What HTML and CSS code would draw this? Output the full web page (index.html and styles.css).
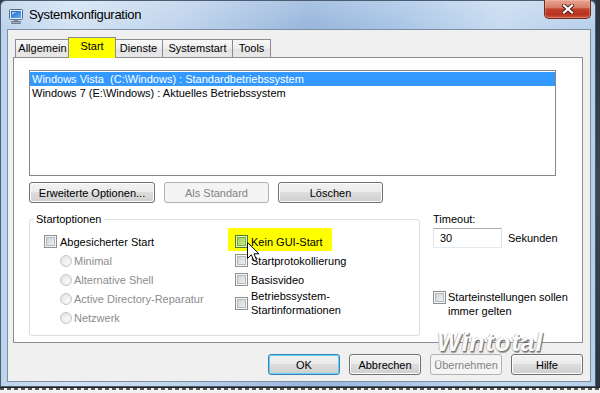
FILE: index.html
```html
<!DOCTYPE html>
<html>
<head>
    <title>Systemkonfiguration</title>
    <link rel="stylesheet" href="styles.css">
</head>
<body>
    <div id="screen">
        <div id="top-row">
            <div id="window">
                <div id="titlebar">
                    <svg class="app-icon" viewBox="0 0 16 16">
                        <defs>
                            <linearGradient id="scr" x1="0" y1="0" x2="1" y2="1">
                                <stop offset="0" stop-color="#1c64c8"/>
                                <stop offset="1" stop-color="#62b0f2"/>
                            </linearGradient>
                        </defs>
                        <rect x="1.5" y="1.5" width="13" height="10" rx="1" fill="#e4eaf1" stroke="#5b6b7f"/>
                        <rect x="3" y="3" width="10" height="7" fill="url(#scr)"/>
                        <path d="M4 4 L8 4 L4 7 Z" fill="#ffffff" opacity="0.6"/>
                        <rect x="6" y="11.5" width="4" height="2" fill="#7d899a"/>
                        <rect x="3.5" y="13.5" width="9" height="2" rx="0.5" fill="#a3afbd" stroke="#5b6b7f" stroke-width="0.8"/>
                    </svg>
                    <span class="title">Systemkonfiguration</span>
                    <div class="close-button">
                        <svg viewBox="0 0 12 10" width="12" height="10">
                            <path d="M2 1.5 L10 8.5 M10 1.5 L2 8.5" stroke="#4a1c14" stroke-width="4" stroke-linecap="square"/>
                            <path d="M2 1.5 L10 8.5 M10 1.5 L2 8.5" stroke="#ffffff" stroke-width="2.2" stroke-linecap="square"/>
                        </svg>
                    </div>
                </div>

                <div id="client">
                    <div id="tabs">
                        <div class="tab tab-allgemein">Allgemein</div>
                        <div class="tab tab-start selected">Start</div>
                        <div class="tab tab-dienste">Dienste</div>
                        <div class="tab tab-systemstart">Systemstart</div>
                        <div class="tab tab-tools">Tools</div>
                    </div>

                    <div id="panel">
                        <div id="os-list">
                            <div class="os-item selected">Windows Vista  (C:\Windows) : Standardbetriebssystem</div>
                            <div class="os-item">Windows 7 (E:\Windows) : Aktuelles Betriebssystem</div>
                        </div>

                        <div id="list-buttons">
                            <button class="btn btn-advanced">Erweiterte Optionen...</button>
                            <button class="btn btn-mid" disabled>Als Standard</button>
                            <button class="btn btn-mid">Löschen</button>
                        </div>

                        <div id="lower">
                            <fieldset id="boot-options">
                                <legend>Startoptionen</legend>
                                <div class="col">
                                    <div class="option"><span class="checkbox"></span>Abgesicherter Start</div>
                                    <div class="option sub"><span class="radio"></span>Minimal</div>
                                    <div class="option sub"><span class="radio"></span>Alternative Shell</div>
                                    <div class="option sub"><span class="radio"></span>Active Directory-Reparatur</div>
                                    <div class="option sub"><span class="radio"></span>Netzwerk</div>
                                </div>
                                <div class="col">
                                    <div class="option highlight"><span class="checkbox hover"></span>Kein GUI-Start</div>
                                    <div class="option"><span class="checkbox"></span>Startprotokollierung</div>
                                    <div class="option"><span class="checkbox"></span>Basisvideo</div>
                                    <div class="option two-line"><span class="checkbox"></span><span>Betriebssystem-<br>Startinformationen</span></div>
                                </div>
                            </fieldset>

                            <div id="timeout-box">
                                <div class="timeout-label">Timeout:</div>
                                <div class="timeout-row">
                                    <div class="textbox">30</div>
                                    <span class="unit">Sekunden</span>
                                </div>
                                <div class="start-setting"><span class="checkbox"></span><span>Starteinstellungen sollen<br>immer gelten</span></div>
                            </div>
                        </div>
                    </div>

                    <div id="footer">
                        <button class="btn btn-default">OK</button>
                        <button class="btn">Abbrechen</button>
                        <button class="btn" disabled>Übernehmen</button>
                        <button class="btn">Hilfe</button>
                    </div>
                </div>

                <div class="watermark">Wintotal</div>
                <svg class="cursor" viewBox="0 0 13 20" width="13" height="20">
                    <path d="M0.5 0.5 L0.5 16.5 L4.3 12.8 L7 19 L9.6 17.9 L7 11.8 L12 11.8 Z" fill="#ffffff" stroke="#000000" stroke-width="1"/>
                </svg>
            </div>
            <div id="desktop-edge"></div>
        </div>
        <div id="bottom-strip"></div>
    </div>
</body>
</html>
```

FILE: styles.css
```css
body {
    margin: 0;
    width: 600px;
    height: 393px;
    overflow: hidden;
    background-color: #3a3f46;
    font-family: "Liberation Sans", Arial, sans-serif;
    font-size: 11px;
    color: #000;
}

#screen {
    display: flex;
    flex-direction: column;
}

#top-row {
    display: flex;
    height: 387px;
}

/* window frame (aero glass) */
#window {
    position: relative;
    width: 596px;
    height: 387px;
    box-sizing: border-box;
    border: 1px solid #4b5d72;
    border-radius: 6px 6px 0 0;
    padding: 0 4px 4px 6px;
    display: flex;
    flex-direction: column;
    background:
        linear-gradient(to bottom, rgba(255, 255, 255, 0.18), rgba(255, 255, 255, 0) 28px),
        linear-gradient(to right, #bdd3ec 0%, #d3e3f4 12%, #bfd4ec 30%, #97b6dc 52%, #a7c4e5 66%, #c7dbf0 84%, #b8cfea 100%);
}

#titlebar {
    height: 28px;
    display: flex;
    align-items: flex-start;
}

.app-icon {
    width: 16px;
    height: 16px;
    margin: 7px 0 0 1px;
}

.title {
    margin: 6px 0 0 5px;
    font-size: 13px;
    line-height: 16px;
    letter-spacing: -0.3px;
}

.close-button {
    margin-left: auto;
    margin-top: -1px;
    width: 47px;
    height: 19px;
    box-sizing: border-box;
    border: 1px solid #6b2a20;
    border-top: none;
    border-radius: 0 0 5px 5px;
    background: linear-gradient(#e9a795 0%, #d77b66 42%, #c2412c 50%, #b8321f 80%, #cf5940 100%);
    box-shadow: inset 0 0 0 1px rgba(255, 200, 180, 0.35);
    display: flex;
    justify-content: center;
    align-items: center;
}

/* dialog client area */
#client {
    flex: 1;
    background-color: #f0f0f0;
    border: 1px solid #7d8fa5;
    padding: 7px 7px 6px 5px;
    display: flex;
    flex-direction: column;
}

#tabs {
    display: flex;
    align-items: flex-end;
    height: 20px;
    padding-left: 2px;
}

.tab {
    height: 18px;
    box-sizing: border-box;
    border: 1px solid #898c95;
    border-bottom: none;
    background: linear-gradient(#f8f8f8, #eeeeee 50%, #e2e2e2 51%, #e8e8e8);
    text-align: center;
    line-height: 17px;
}

.tab.selected {
    height: 21px;
    margin-bottom: -1px;
    background: #ffff00;
    z-index: 1;
}

.tab-allgemein {
    width: 55px;
}

.tab-start {
    width: 48px;
    margin: 0 -2px 0 -2px;
}

.tab-dienste {
    width: 49px;
}

.tab-systemstart {
    width: 71px;
    margin-left: -1px;
}

.tab-tools {
    width: 39px;
    margin-left: -1px;
}

#panel {
    height: 286px;
    box-sizing: border-box;
    border: 1px solid #898c95;
    background-color: #fff;
    padding: 12px 0 0 15px;
    display: flex;
    flex-direction: column;
}

#os-list {
    width: 527px;
    height: 106px;
    box-sizing: border-box;
    border: 1px solid #828790;
    padding-top: 1px;
}

.os-item {
    height: 14px;
    line-height: 14px;
    padding-left: 2px;
    white-space: pre;
}

.os-item.selected {
    background-color: #3399ff;
    color: #fff;
}

#list-buttons {
    display: flex;
    gap: 9px;
    margin-top: 6px;
}

.btn {
    height: 21px;
    box-sizing: border-box;
    padding: 0;
    border: 1px solid #707070;
    border-radius: 3px;
    background: linear-gradient(#f2f2f2 0%, #ebebeb 49%, #dddddd 50%, #cfcfcf 100%);
    box-shadow: inset 0 0 0 1px #fcfcfc;
    font-family: inherit;
    font-size: 11px;
    color: #000;
}

.btn:disabled {
    border-color: #adb2b5;
    background: #f4f4f4;
    box-shadow: none;
    color: #838383;
}

.btn-default {
    border-color: #3c7fb1;
    box-shadow: inset 0 0 0 1px #5fd3f5;
}

.btn-advanced {
    width: 126px;
}

.btn-mid {
    width: 105px;
}

#lower {
    display: flex;
    align-items: flex-start;
    margin-top: 10px;
}

#boot-options {
    margin: 0;
    width: 391px;
    height: 123px;
    box-sizing: border-box;
    border: 1px solid #d5dfe5;
    border-radius: 3px;
    padding: 6px 0 7px 14px;
    display: grid;
    grid-template-columns: 191px auto;
    align-content: start;
}

#boot-options legend {
    margin-left: -11px;
    padding: 0 3px;
    line-height: 13px;
}

.col {
    display: flex;
    flex-direction: column;
}

.option {
    display: flex;
    align-items: center;
    height: 19px;
    white-space: nowrap;
}

.option .checkbox {
    margin-right: 3px;
}

.option.sub {
    padding-left: 16px;
    color: #8c8c8c;
}

.option.highlight {
    width: 104px;
    height: 23px;
    box-sizing: border-box;
    margin: -4px 0 0 -7px;
    padding: 4px 0 0 7px;
    background-color: #ffff00;
}

.option.two-line {
    height: 28px;
    line-height: 14px;
}

.checkbox {
    flex-shrink: 0;
    width: 13px;
    height: 13px;
    box-sizing: border-box;
    border: 1px solid #8e8f8f;
    background: linear-gradient(135deg, #c6cacf, #f7f7f7);
    box-shadow: inset 0 0 0 1px #f6f6f6, inset 0 0 0 2px #b4b9be;
}

.checkbox.hover {
    border-color: #4d7a2c;
    background: linear-gradient(135deg, #93c452, #d9ee9e);
    box-shadow: inset 0 0 0 1px #e6f4b8, inset 0 0 0 2px #78ac45;
}

.radio {
    flex-shrink: 0;
    width: 12px;
    height: 12px;
    box-sizing: border-box;
    margin-right: 2px;
    border: 1px solid #c6c6c6;
    border-radius: 50%;
    background: radial-gradient(circle at 65% 65%, #fafafa, #dedede);
}

#timeout-box {
    margin-left: 13px;
}

.timeout-label {
    line-height: 13px;
}

.timeout-row {
    display: flex;
    align-items: center;
    margin-top: 2px;
}

.textbox {
    width: 69px;
    height: 20px;
    box-sizing: border-box;
    border: 1px solid;
    border-color: #abadb3 #dbdfe6 #e3e9ef #e2e3ea;
    background-color: #fff;
    padding-left: 6px;
    line-height: 18px;
}

.unit {
    margin-left: 6px;
}

.start-setting {
    display: flex;
    align-items: flex-start;
    margin-top: 42px;
    line-height: 14px;
}

.start-setting .checkbox {
    margin: 1px 2px 0 0;
}

#footer {
    display: flex;
    justify-content: flex-end;
    gap: 9px;
    margin-top: 11px;
}

#footer .btn {
    width: 72px;
}

/* overlays on the screenshot */
.watermark {
    position: absolute;
    left: 436px;
    top: 329px;
    font-size: 25px;
    line-height: 25px;
    font-weight: bold;
    font-style: italic;
    letter-spacing: 1px;
    color: #fbfbfb;
    text-shadow: 1px 1px 0 #7a7a7a, 1px 2px 1px rgba(0, 0, 0, 0.35), -1px 0 0 #c8c8c8;
}

.cursor {
    position: absolute;
    left: 246px;
    top: 241px;
}

#desktop-edge {
    flex: 1;
    background: linear-gradient(#2d333b, #3f4650 50%, #2d333b);
}

#bottom-strip {
    height: 6px;
    box-sizing: border-box;
    border-top: 1px solid #222;
    background:
        linear-gradient(to bottom, transparent 0, transparent 2px, #f2f2f2 2px),
        repeating-linear-gradient(to right, #555 0, #555 4px, #f2f2f2 4px, #f2f2f2 7px);
}
```
